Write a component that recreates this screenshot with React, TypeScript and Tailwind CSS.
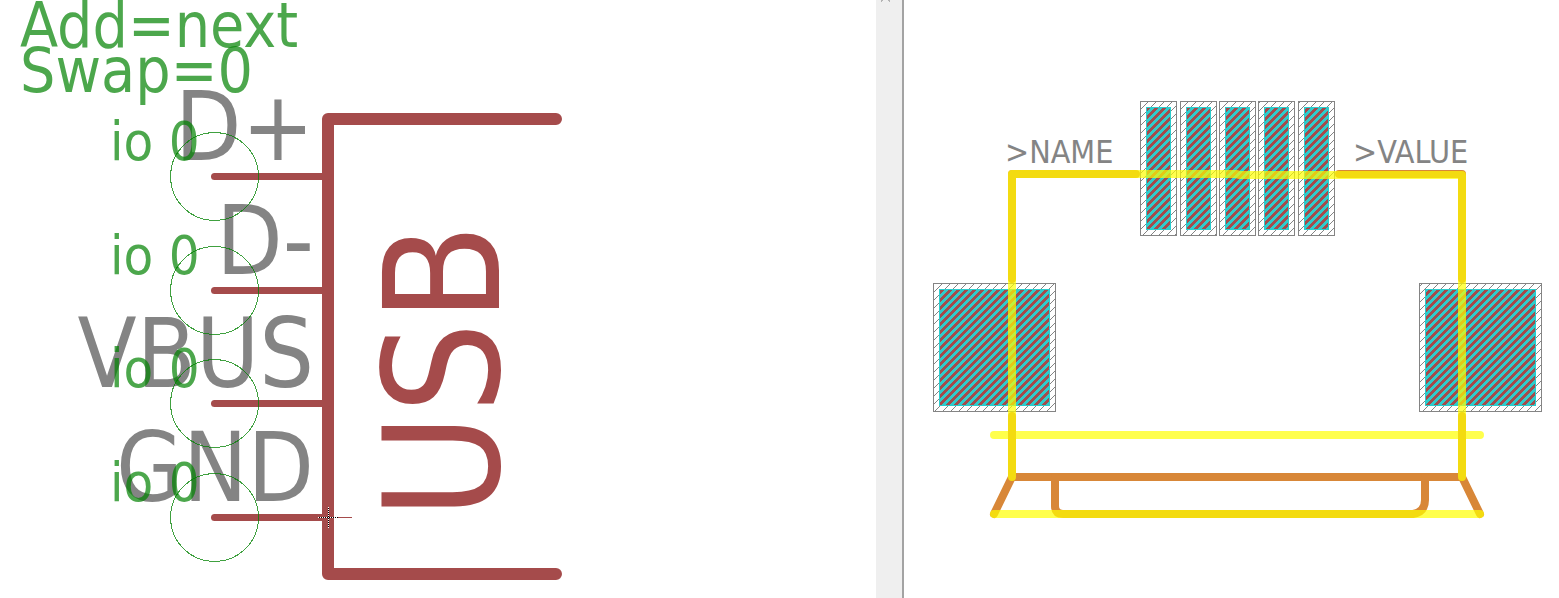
import type { ReactNode } from "react";

const FONT = "'DejaVu Sans Condensed', 'DejaVu Sans', sans-serif";

const pins = [
  { name: "D+", y: 176 },
  { name: "D-", y: 290 },
  { name: "VBUS", y: 403 },
  { name: "GND", y: 517 },
];

const contactPads = [1140, 1180, 1219, 1258, 1298];

const rows = [0, 1, 2, 3, 4, 5, 6, 7];

function SymbolView() {
  return (
    <svg viewBox="0 0 876 598" className="block h-auto w-full" role="img" aria-label="USB symbol" fontFamily={FONT}>
      <g fill="#848484" fontSize="96" textAnchor="end">
        {pins.map((pin) => (
          <text key={pin.name} x="314" y={pin.y - 16}>
            {pin.name}
          </text>
        ))}
      </g>
      <g stroke="#a54b4b" fill="none" strokeLinecap="round" strokeLinejoin="round">
        <path d="M556 119H328V574H556" strokeWidth="12" />
        {pins.map((pin) => (
          <path key={pin.name} d={`M214.500 ${pin.y + 0.5}H328`} strokeWidth="7" />
        ))}
      </g>
      <text fill="#a54b4b" fontSize="160" transform="translate(499 519) rotate(-90)">
        USB
      </text>
      <g fill="#008200" fillOpacity="0.7">
        <text x="20" y="47" fontSize="62">
          Add=next
        </text>
        <text x="20" y="92" fontSize="62">
          Swap=0
        </text>
        {pins.map((pin) => (
          <text key={pin.name} x="110" y={pin.y - 16} fontSize="54">
            io 0
          </text>
        ))}
      </g>
      <g fill="none" stroke="#008200" strokeOpacity="0.75" shapeRendering="crispEdges">
        {pins.map((pin) => (
          <circle key={pin.name} cx="214.500" cy={pin.y + 0.5} r="44" />
        ))}
      </g>
      <g shapeRendering="crispEdges">
        <path d="M338 517.500H352" stroke="#a54b4b" />
        <path d="M318 517.500H338M328.500 507V528" stroke="#000" />
        <path d="M318 517.500H338M328.500 507V528" stroke="#fff" strokeDasharray="1 1" />
      </g>
    </svg>
  );
}

function Pad({ x, y, width, height }: { x: number; y: number; width: number; height: number }) {
  return (
    <g shapeRendering="crispEdges">
      <rect x={x + 0.5} y={y + 0.5} width={width - 1} height={height - 1} fill="url(#mask)" stroke="#848484" />
      <rect x={x + 6} y={y + 6} width={width - 12} height={height - 12} fill="url(#copper)" />
      <rect x={x + 6.5} y={y + 6.5} width={width - 13} height={height - 13} fill="none" stroke="#2dcccc" />
    </g>
  );
}

function PackageView() {
  return (
    <svg viewBox="904 0 655 598" className="block h-auto w-full" role="img" aria-label="USB package" fontFamily={FONT}>
      <defs>
        <pattern id="mask" width="8" height="8" patternUnits="userSpaceOnUse">
          <rect width="8" height="8" fill="#fff" />
          {rows.map((row) => (
            <rect key={row} x={(9 - row) % 8} y={row} width="1" height="1" fill="#848484" />
          ))}
        </pattern>
        <pattern id="copper" width="8" height="8" patternUnits="userSpaceOnUse">
          <rect width="8" height="8" fill="#2dcccc" />
          {rows.map((row) => (
            <path key={row} d={`M${6 - row} ${row + 0.5}h4M${14 - row} ${row + 0.5}h4M${-2 - row} ${row + 0.5}h4`} stroke="#a54b4b" />
          ))}
        </pattern>
      </defs>
      {contactPads.map((x) => (
        <Pad key={x} x={x} y={101} width={37} height={135} />
      ))}
      <Pad x={933} y={283} width={123} height={129} />
      <Pad x={1419} y={283} width={123} height={129} />
      <g fill="#848484" fontSize="32">
        <text x="1005" y="163">
          &gt;NAME
        </text>
        <text x="1353" y="163">
          &gt;VALUE
        </text>
      </g>
      <g fill="none" stroke="#d88738" strokeWidth="8" strokeLinecap="round" strokeLinejoin="round">
        <path d="M1012 174H1136M1012 174V279M1012 416V477L994 514M1012 477H1462L1480 514M1462 477V416M1462 279V174H1339" />
        <path d="M1055 477V506Q1055 514 1063 514H1413Q1425 512 1425 500V477" />
      </g>
      <g fill="none" stroke="#ffff00" strokeOpacity="0.7" strokeWidth="8" strokeLinecap="round" strokeLinejoin="round">
        <path d="M1012 477V174H1236L1240 175H1462V477M994 435H1480M994 514H1480" />
      </g>
    </svg>
  );
}

function Pane({ children }: { children: ReactNode }) {
  return <section className="min-w-0 overflow-hidden">{children}</section>;
}

export default function App() {
  return (
    <main className="grid grid-cols-[876fr_28px_655fr] bg-white">
      <Pane>
        <SymbolView />
      </Pane>
      <div className="overflow-hidden border-r-2 border-[#a3a3a3] bg-[#efefef]">
        <svg viewBox="0 0 26 4" className="block w-full" shapeRendering="crispEdges" aria-hidden="true">
          <path d="M5 0H7V1H6V2H5ZM12 0H14V2H13V1H12Z" fill="#b4b4b4" />
        </svg>
      </div>
      <Pane>
        <PackageView />
      </Pane>
    </main>
  );
}
